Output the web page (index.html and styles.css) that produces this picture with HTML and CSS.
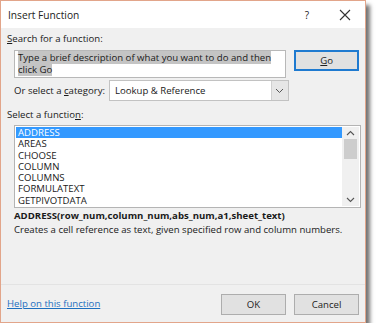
FILE: index.html
```html
<!DOCTYPE html>
<html lang="en">
  <head>
    <meta charset="UTF-8" />
    <title>Insert Function</title>
    <link rel="stylesheet" href="styles.css">
  </head>
  <body>
    <div class="dialog">
      <div class="titlebar">
        <span class="title">Insert Function</span>
        <span class="help">?</span>
        <span class="close">
          <svg width="12" height="12" viewBox="0 0 12 12"><path d="M1 1L11 11M11 1L1 11" stroke="#333" stroke-width="1.1" fill="none"/></svg>
        </span>
      </div>
      <div class="content">
        <div class="label"><u>S</u>earch for a function:</div>
        <div class="search-row">
          <div class="search-box"><span class="sel">Type a brief description of what you want to do and then click Go</span></div>
          <button class="btn btn-default"><u>G</u>o</button>
        </div>
        <div class="category-row">
          <span>Or select a <u>c</u>ategory:</span>
          <div class="select">
            <span class="select-value">Lookup &amp; Reference</span>
            <span class="select-arrow">
              <svg width="9" height="6" viewBox="0 0 9 6"><path d="M1 1L4.5 4.5L8 1" stroke="#555" stroke-width="1" fill="none"/></svg>
            </span>
          </div>
        </div>
        <div class="label list-label">Select a functio<u>n</u>:</div>
        <div class="listbox">
          <ul class="items">
            <li class="active">ADDRESS</li>
            <li>AREAS</li>
            <li>CHOOSE</li>
            <li>COLUMN</li>
            <li>COLUMNS</li>
            <li>FORMULATEXT</li>
            <li>GETPIVOTDATA</li>
          </ul>
          <div class="scrollbar">
            <svg width="9" height="6" viewBox="0 0 9 6"><path d="M1 5L4.5 1.5L8 5" stroke="#555" stroke-width="1.1" fill="none"/></svg>
            <div class="thumb"></div>
            <div class="track"></div>
            <svg width="9" height="6" viewBox="0 0 9 6"><path d="M1 1L4.5 4.5L8 1" stroke="#555" stroke-width="1.1" fill="none"/></svg>
          </div>
        </div>
        <div class="signature">ADDRESS(row_num,column_num,abs_num,a1,sheet_text)</div>
        <div class="description">Creates a cell reference as text, given specified row and column numbers.</div>
      </div>
      <div class="footer">
        <a href="#" class="help-link">Help on this function</a>
        <div class="buttons">
          <button class="btn">OK</button>
          <button class="btn">Cancel</button>
        </div>
      </div>
    </div>
  </body>
</html>
```

FILE: styles.css
```css
* {
  box-sizing: border-box;
}

body {
  margin: 0;
  background-color: #fff;
  font-family: 'Open Sans', 'Noto Sans', sans-serif;
  font-size: 9.6px;
  color: #1a1a1a;
}

.dialog {
  width: 366px;
  height: 323px;
  border: 1px solid #e2a58a;
  background-color: #f0f0f0;
  box-shadow: 4px 5px 4px rgba(0, 0, 0, 0.55);
  display: flex;
  flex-direction: column;
}

.titlebar {
  height: 27px;
  background-color: #fff;
  display: flex;
  align-items: center;
  padding-left: 7px;
  font-size: 10.2px;
  color: #222;
}

.title {
  flex: 1;
}

.help {
  width: 40px;
  text-align: center;
  font-size: 10px;
  padding-left: 4px;
}

.close {
  width: 40px;
  display: flex;
  justify-content: center;
}

.content {
  flex: 1;
  padding: 4px 6px 0 6px;
}

.label {
  height: 14px;
  line-height: 14px;
}

.search-row {
  display: flex;
  padding-left: 7px;
  margin-top: 4px;
  gap: 8px;
}

.search-box {
  width: 274px;
  height: 28px;
  background-color: #fff;
  border: 1px solid #b8b8b8;
  padding: 1px 3px;
  line-height: 12px;
}

.sel {
  background-color: #c4c4c4;
}

.btn {
  width: 65px;
  height: 21px;
  font-family: inherit;
  font-size: 9.6px;
  color: #222;
  background-color: #e1e1e1;
  border: 1px solid #adadad;
  padding: 0;
}

.btn-default {
  border: 2px solid #1e7ad0;
}

.category-row {
  display: flex;
  align-items: center;
  padding-left: 7px;
  margin-top: 2px;
  gap: 4px;
}

.select {
  width: 180px;
  height: 21px;
  background-color: #fff;
  border: 1px solid #c2c2c2;
  display: flex;
  align-items: center;
}

.select-value {
  flex: 1;
  padding-left: 5px;
}

.select-arrow {
  width: 17px;
  height: 19px;
  background-color: #e6e6e6;
  border-left: 1px solid #d0d0d0;
  display: flex;
  align-items: center;
  justify-content: center;
}

.list-label {
  margin-top: 7px;
}

.listbox {
  margin: 3px 0 0 7px;
  width: 347px;
  height: 83px;
  background-color: #fff;
  border: 1px solid #b4b4b4;
  display: flex;
  padding: 1px;
}

.items {
  list-style: none;
  margin: 0;
  padding: 0;
  flex: 1;
}

.items li {
  height: 11.3px;
  line-height: 11.3px;
  padding-left: 2px;
}

.items li.active {
  background-color: #3399ff;
  color: #fff;
}

.scrollbar {
  width: 17px;
  background-color: #f0f0f0;
  display: flex;
  flex-direction: column;
  align-items: center;
  padding: 3px 0;
}

.thumb {
  width: 13px;
  height: 20px;
  margin-top: 3px;
  background-color: #cdcdcd;
}

.track {
  flex: 1;
}

.signature {
  margin: 1px 0 0 7px;
  font-weight: bold;
  line-height: 14px;
}

.description {
  margin-left: 7px;
  line-height: 14px;
}

.footer {
  height: 38px;
  border-top: 1px solid #e3e3e3;
  display: flex;
  align-items: center;
  padding: 0 6px;
}

.help-link {
  flex: 1;
  color: #1e6fbf;
}

.buttons {
  display: flex;
  gap: 8px;
  margin-top: 1px;
}
```
